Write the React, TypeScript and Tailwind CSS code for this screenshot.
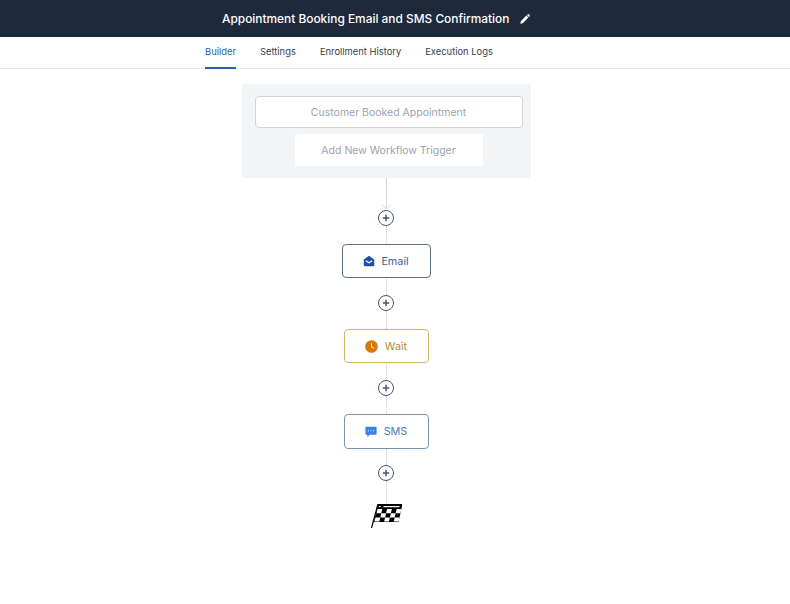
function PlusButton() {
  return (
    <div className="w-4 h-4 rounded-full border-[1.5px] border-[#475569] bg-white flex items-center justify-center shrink-0">
      <svg width="8" height="8" viewBox="0 0 8 8" fill="none" stroke="#475569" strokeWidth="1.5">
        <path d="M4 0.8V7.2M0.8 4H7.2" />
      </svg>
    </div>
  );
}

function Dotted({ height }: { height: string }) {
  return <div className={`w-0 border-l border-dotted border-[#c4c9d1] ${height}`}></div>;
}

function ArrowLine() {
  return (
    <svg width="11" height="32" viewBox="0 0 11 32" fill="none" stroke="#d4d7dc">
      <path d="M5.5 0V31M1 26.5L5.5 31L10 26.5" />
    </svg>
  );
}

function MailIcon() {
  return (
    <svg width="12" height="12" viewBox="0 0 13 13">
      <path d="M0.8 5L6.5 0.8L12.2 5V11.2C12.2 11.8 11.8 12.2 11.2 12.2H1.8C1.2 12.2 0.8 11.8 0.8 11.2Z" fill="#1e4fa3" />
      <path d="M3 6.2L6.5 8.4L10 6.2" fill="none" stroke="#fff" strokeWidth="1.3" />
    </svg>
  );
}

function ClockIcon() {
  return (
    <svg width="13" height="13" viewBox="0 0 14 14">
      <circle cx="7" cy="7" r="6.8" fill="#d97706" />
      <path d="M7 3.2V7.2L9.8 9" fill="none" stroke="#fde9c8" strokeWidth="1.1" />
    </svg>
  );
}

function SmsIcon() {
  return (
    <svg width="12" height="12" viewBox="0 0 12 12">
      <path d="M1.2 0.8H10.8C11.3 0.8 11.6 1.1 11.6 1.6V8C11.6 8.5 11.3 8.8 10.8 8.8H4.6L2.4 11.2V8.8H1.2C0.7 8.8 0.4 8.5 0.4 8V1.6C0.4 1.1 0.7 0.8 1.2 0.8Z" fill="#3b82e0" />
      <path d="M3 4.8H4M5.5 4.8H6.5M8 4.8H9" stroke="#fff" strokeWidth="1" />
    </svg>
  );
}

function FlagIcon() {
  const cells = [];
  for (let row = 0; row < 3; row++) {
    for (let col = 0; col < 5; col++) {
      if ((row + col) % 2 === 0) {
        cells.push(<rect key={`${row}-${col}`} x={col * 4.8 + 0.6} y={row * 4.2 + 5} width="4.8" height="4.2" fill="#fff" />);
      }
    }
  }
  return (
    <svg width="32" height="25" viewBox="0 0 32 25">
      <g transform="translate(8 1) skewX(-13)">
        <rect x="0" y="0" width="24.6" height="18" fill="#000" />
        <rect x="6" y="2" width="16" height="1.2" fill="#fff" />
        <rect x="1.5" y="2" width="1.6" height="1.2" fill="#fff" />
        {cells}
      </g>
      <path d="M8 1L1.5 25" stroke="#000" strokeWidth="1.2" />
    </svg>
  );
}

function ActionNode({ label, icon, width, border, text, height, gap }: { label: string; icon: React.ReactNode; width: string; border: string; text: string; height: string; gap: string }) {
  return (
    <div className={`${width} ${height} ${border} ${text} ${gap} border rounded-[4px] bg-white flex items-center justify-center text-[10.8px]`}>
      {icon}
      <span className="pt-[2px]">{label}</span>
    </div>
  );
}

export default function App() {
  const tabs = ['Builder', 'Settings', 'Enrollment History', 'Execution Logs'];

  return (
    <div className="min-h-[604px] bg-white font-['Inter','Liberation_Sans',sans-serif]">
      {/* Title bar */}
      <div className="h-[37px] bg-[#1e293b] flex items-center pl-[222px] gap-[11px]">
        <span className="text-[11.9px] font-medium text-white">Appointment Booking Email and SMS Confirmation</span>
        <svg width="10" height="10" viewBox="0 0 10 10" fill="#fff">
          <path d="M0.3 9.7L0.8 7.2L6.4 1.6L8.4 3.6L2.8 9.2ZM7 1L7.8 0.3C8.1 0 8.5 0 8.8 0.3L9.7 1.2C10 1.5 10 1.9 9.7 2.2L9 3Z" />
        </svg>
      </div>

      {/* Tabs */}
      <div className="h-[32px] border-b border-[#e5e7eb] flex pl-[205px] gap-[24px]">
        {tabs.map((tab, i) => (
          <div
            key={tab}
            className={`h-[32px] pt-[8px] text-[9.4px] ${i === 0 ? 'text-[#2b5ea7] border-b-2 border-[#2b5ea7]' : 'text-[#374151]'}`}
          >
            {tab}
          </div>
        ))}
      </div>

      {/* Workflow */}
      <div className="flex flex-col items-center pt-[15px] pr-[18px]">
        <div className="w-[289px] h-[94px] ml-[1px] pl-[4px] bg-[#f3f4f6] rounded-[4px] flex flex-col items-center pt-[12px] gap-[6px]">
          <div className="w-[268px] h-[32px] pt-[2px] bg-white border border-[#d1d5db] rounded-[4px] flex items-center justify-center text-[10.5px] text-[#9ca3af]">
            Customer Booked Appointment
          </div>
          <div className="w-[188px] h-[32px] pt-[2px] bg-white flex items-center justify-center text-[10.5px] text-[#9ca3af]">
            Add New Workflow Trigger
          </div>
        </div>
        <ArrowLine />
        <PlusButton />
        <Dotted height="h-[18px]" />
        <ActionNode label="Email" icon={<MailIcon />} gap="gap-[6px]" width="w-[89px]" height="h-[34px]" border="border-[#5f6f88]" text="text-[#3f5f8f]" />
        <Dotted height="h-[17px]" />
        <PlusButton />
        <Dotted height="h-[18px]" />
        <ActionNode label="Wait" icon={<ClockIcon />} gap="gap-[7px]" width="w-[85px]" height="h-[34px]" border="border-[#d6b36a]" text="text-[#b98a2e]" />
        <Dotted height="h-[17px]" />
        <PlusButton />
        <Dotted height="h-[18px]" />
        <ActionNode label="SMS" icon={<SmsIcon />} gap="gap-[7px]" width="w-[85px]" height="h-[35px]" border="border-[#7d93ad]" text="text-[#4a7ab8]" />
        <Dotted height="h-[16px]" />
        <PlusButton />
        <Dotted height="h-[22px]" />
        <FlagIcon />
      </div>
    </div>
  );
}
